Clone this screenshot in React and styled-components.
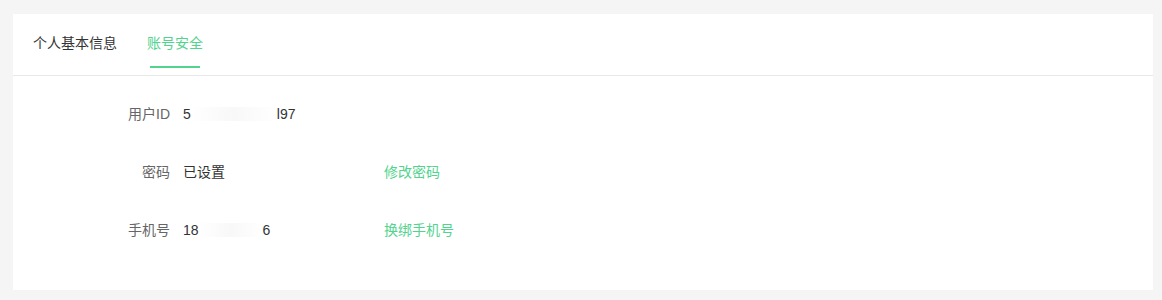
import React from 'react';
import styled, { createGlobalStyle } from 'styled-components';

const GlobalStyle = createGlobalStyle`
    body {
        margin: 0;
        background: #f5f5f5;
        font-family: "Liberation Sans", "Noto Sans CJK SC", sans-serif;
    }
`;

const tabs = ['个人基本信息', '账号安全'];

const rows = [
    { label: '用户ID', head: '5', mask: 86, tail: 'l97' },
    { label: '密码', head: '已设置', action: '修改密码' },
    { label: '手机号', head: '18', mask: 64, tail: '6', action: '换绑手机号' },
];

const App = () => {
    const [active, setActive] = React.useState(1);

    return (
        <Page>
            <GlobalStyle />
            <Card>
                <TabBar>
                    {tabs.map((t, i) => (
                        <Tab key={t} $active={i === active} onClick={() => setActive(i)}>
                            {t}
                        </Tab>
                    ))}
                </TabBar>
                <Body>
                    {rows.map((r) => (
                        <Row key={r.label}>
                            <Label>{r.label}</Label>
                            <Value>
                                {r.head}
                                {r.mask && <Mask style={{ width: r.mask }} />}
                                {r.tail}
                            </Value>
                            {r.action && <Action>{r.action}</Action>}
                        </Row>
                    ))}
                </Body>
            </Card>
        </Page>
    );
};

const Page = styled.div`
    padding: 14px 9px 10px 13px;
`;

const Card = styled.div`
    background: #fff;
    height: 276px;
`;

const TabBar = styled.div`
    display: flex;
    gap: 30px;
    height: 61px;
    padding-left: 20px;
    border-bottom: 1px solid #e8e8e8;
`;

const Tab = styled.div`
    position: relative;
    padding-top: 18px;
    font-size: 14px;
    line-height: 22px;
    color: ${(p) => (p.$active ? '#52d38e' : '#333')};
    cursor: pointer;

    &::after {
        content: '';
        display: ${(p) => (p.$active ? 'block' : 'none')};
        position: absolute;
        left: 50%;
        bottom: 7px;
        width: 50px;
        height: 2px;
        margin-left: -25px;
        background: #52d38e;
    }
`;

const Body = styled.div`
    display: flex;
    flex-direction: column;
    gap: 36px;
    padding-top: 27px;
`;

const Row = styled.div`
    display: grid;
    grid-template-columns: 157px 201px auto;
    column-gap: 13px;
    font-size: 14px;
    line-height: 22px;
`;

const Label = styled.span`
    text-align: right;
    color: #666;
`;

const Value = styled.span`
    display: flex;
    align-items: center;
    color: #333;
    grid-column: 2;
`;

const Mask = styled.span`
    display: inline-block;
    height: 14px;
    background: linear-gradient(90deg, #fff, #f8f8f8 50%, #fff);
`;

const Action = styled.span`
    margin-left: -13px;
    color: #52d38e;
    cursor: pointer;
`;

export default App;
